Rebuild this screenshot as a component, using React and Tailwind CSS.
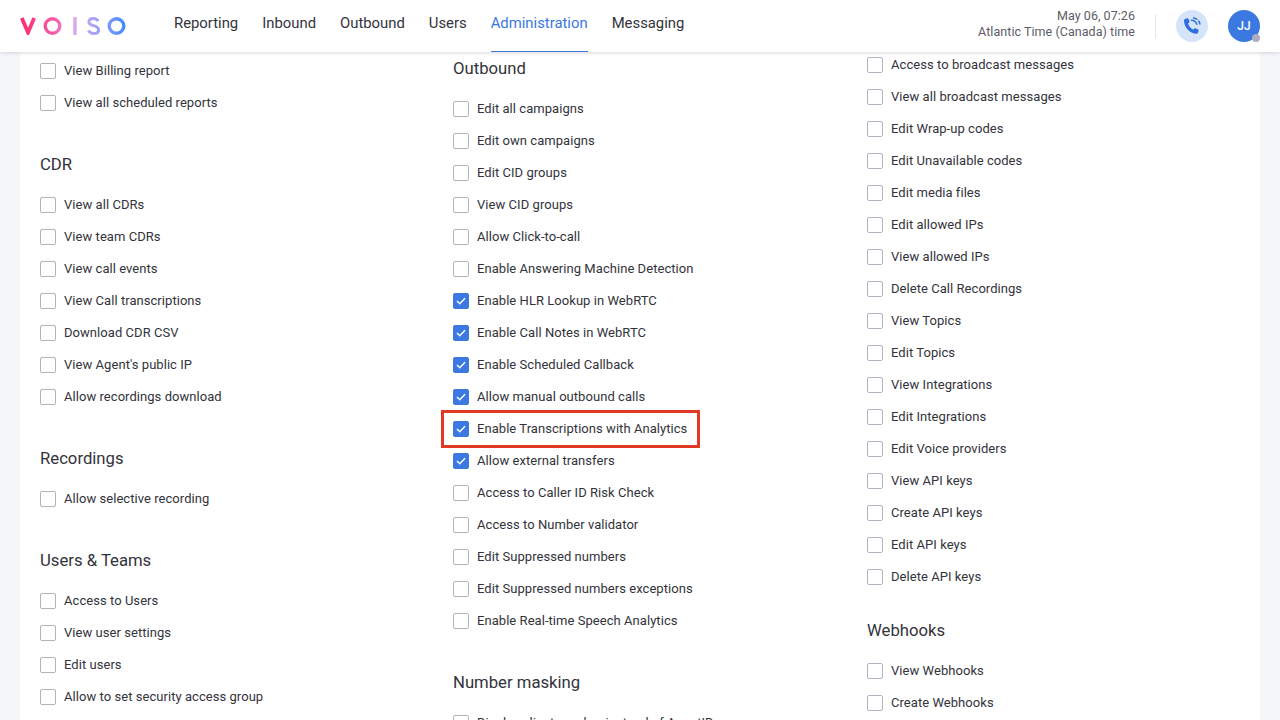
const column1 = [
  { rows: [['View Billing report'], ['View all scheduled reports']] },
  {
    title: 'CDR',
    rows: [['View all CDRs'], ['View team CDRs'], ['View call events'], ['View Call transcriptions'], ['Download CDR CSV'], ["View Agent's public IP"], ['Allow recordings download']],
  },
  { title: 'Recordings', rows: [['Allow selective recording']] },
  {
    title: 'Users & Teams',
    rows: [['Access to Users'], ['View user settings'], ['Edit users'], ['Allow to set security access group']],
  },
];

const column2 = [
  {
    title: 'Outbound',
    first: true,
    rows: [
      ['Edit all campaigns'],
      ['Edit own campaigns'],
      ['Edit CID groups'],
      ['View CID groups'],
      ['Allow Click-to-call'],
      ['Enable Answering Machine Detection'],
      ['Enable HLR Lookup in WebRTC', true],
      ['Enable Call Notes in WebRTC', true],
      ['Enable Scheduled Callback', true],
      ['Allow manual outbound calls', true],
      ['Enable Transcriptions with Analytics', true, true],
      ['Allow external transfers', true],
      ['Access to Caller ID Risk Check'],
      ['Access to Number validator'],
      ['Edit Suppressed numbers'],
      ['Edit Suppressed numbers exceptions'],
      ['Enable Real-time Speech Analytics'],
    ],
  },
  { title: 'Number masking', rows: [['Display client number instead of AgentID']] },
];

const column3 = [
  {
    rows: [
      ['Access to broadcast messages'],
      ['View all broadcast messages'],
      ['Edit Wrap-up codes'],
      ['Edit Unavailable codes'],
      ['Edit media files'],
      ['Edit allowed IPs'],
      ['View allowed IPs'],
      ['Delete Call Recordings'],
      ['View Topics'],
      ['Edit Topics'],
      ['View Integrations'],
      ['Edit Integrations'],
      ['Edit Voice providers'],
      ['View API keys'],
      ['Create API keys'],
      ['Edit API keys'],
      ['Delete API keys'],
    ],
  },
  { title: 'Webhooks', rows: [['View Webhooks'], ['Create Webhooks']], tight: true },
];

const nav = ['Reporting', 'Inbound', 'Outbound', 'Users', 'Administration', 'Messaging'];

function Logo() {
  return (
    <svg width="106" height="18" viewBox="0 0 106 18" fill="none">
      <defs>
        <linearGradient id="voiso" gradientUnits="userSpaceOnUse" x1="0" y1="0" x2="106" y2="0">
          <stop offset="0" stopColor="#fb2d6c" />
          <stop offset="0.33" stopColor="#f55fa8" />
          <stop offset="0.52" stopColor="#d9a8f0" />
          <stop offset="0.72" stopColor="#a3a2f6" />
          <stop offset="1" stopColor="#3f8cff" />
        </linearGradient>
      </defs>
      <path d="M1.8 1 8 15.500 14.200 1" stroke="url(#voiso)" strokeWidth="3.800" />
      <circle cx="32.500" cy="9" r="7.300" stroke="url(#voiso)" strokeWidth="3.400" />
      <path d="M55 0v18" stroke="url(#voiso)" strokeWidth="3.400" />
      <path d="M78 4.200c-.9-1.900-2.600-2.700-4.700-2.700-2.600 0-4.400 1.300-4.400 3.400 0 4.900 9.700 2.400 9.700 8 0 2.200-2 3.600-4.800 3.600-2.400 0-4.300-1-5.300-3.100" stroke="url(#voiso)" strokeWidth="3" />
      <circle cx="96.500" cy="9" r="7.300" stroke="url(#voiso)" strokeWidth="3.400" />
    </svg>
  );
}

function PhoneIcon() {
  return (
    <svg width="18" height="18" viewBox="0 0 18 18" fill="none" className="text-[#2f6fdc]">
      <path
        d="M2.200 1.900 4.300 1.300c.5-.1 1 .1 1.200.6l1 2.500c.2.400.1.900-.3 1.200L5 6.600c.7 2.400 2.700 4.800 5.200 6l1.200-1.100c.3-.3.800-.4 1.200-.2l2.500 1.100c.5.200.7.700.6 1.200l-.6 2c-.2.700-.8 1.100-1.500 1.100C6.700 16.500 1 10.100 1 3.400c0-.7.500-1.300 1.200-1.500Z"
        fill="currentColor"
      />
      <path d="M9 3.300c2.500.3 4.400 2 5 4.500" stroke="currentColor" strokeWidth="1.500" strokeLinecap="round" transform="rotate(-6 9 9)" />
      <path d="M10.600.9c3.200.5 5.600 2.900 6.300 6" stroke="currentColor" strokeWidth="1.500" strokeLinecap="round" strokeDasharray="3.500 2.500" />
    </svg>
  );
}

function Row({ label, checked, marked }) {
  return (
    <div className="relative flex h-8 items-center gap-2">
      <span
        className={`flex h-4 w-4 shrink-0 items-center justify-center rounded-[2px] border ${
          checked ? 'border-[#3b78e0] bg-[#3b78e0]' : 'border-[#b4b2bf] bg-white'
        }`}
      >
        {checked ? (
          <svg width="10" height="8" viewBox="0 0 10 8" fill="none" stroke="white" strokeWidth="1.500">
            <path d="M1 4l2.700 2.700L9 1.300" />
          </svg>
        ) : null}
      </span>
      <span className="whitespace-nowrap">{label}</span>
      {marked ? <div className="absolute left-[-12px] top-[-3px] h-[38px] w-[259px] border-[3px] border-[#e03a26]" /> : null}
    </div>
  );
}

function Group({ title, rows, first, tight }) {
  const top = !title || first ? '' : tight ? 'mt-[26px]' : 'mt-[34px]';
  return (
    <div className={top}>
      {title ? <h3 className="flex h-6 items-center text-[16.7px] leading-6 tracking-normal text-[#33333b]">{title}</h3> : null}
      <div className={title ? 'mt-[12px]' : ''}>
        {rows.map(([label, checked, marked]) => (
          <Row key={label} label={label} checked={checked} marked={marked} />
        ))}
      </div>
    </div>
  );
}

export default function App() {
  return (
    <div className="flex h-screen flex-col overflow-hidden bg-[#f5f7fa] text-[13px] tracking-[0.05px] text-[#33333b] [font-family:Roboto,'Liberation_Sans',sans-serif]">
      <header className="relative z-10 flex h-[52px] shrink-0 items-center bg-white px-5 shadow-[0_1px_4px_rgba(0,0,0,0.15)]">
        <Logo />
        <nav className="ml-12 flex h-full gap-6 text-[14.85px] tracking-normal">
          {nav.map((item) => (
            <a
              key={item}
              className={`flex h-full items-center pb-[5px] ${
                item === 'Administration' ? 'border-b border-[#3b78e0] text-[#3b78e0]' : 'text-[#33333b]'
              }`}
            >
              {item}
            </a>
          ))}
        </nav>
        <div className="ml-auto pb-1 text-right text-[12.5px] leading-4 text-[#5c5c66]">
          <div>May 06, 07:26</div>
          <div>Atlantic Time (Canada) time</div>
        </div>
        <div className="mx-5 h-6 w-px bg-[#e4e6ea]" />
        <button className="flex h-8 w-8 items-center justify-center rounded-full bg-[#d6e4fa]">
          <PhoneIcon />
        </button>
        <div className="relative ml-5 flex h-8 w-8 items-center justify-center rounded-full bg-[#3b78e0] text-[12px] font-medium text-white">
          JJ
          <span className="absolute bottom-0 right-0 h-2 w-2 rounded-full bg-[#aeacc0]" />
        </div>
      </header>
      <main className="mx-5 grid min-h-0 flex-1 grid-cols-[413px_414px_1fr] overflow-hidden bg-white pl-5">
        <div className="pt-[3px]">
          {column1.map((group, i) => (
            <Group key={i} {...group} />
          ))}
        </div>
        <div className="pt-[5px]">
          {column2.map((group, i) => (
            <Group key={i} {...group} />
          ))}
        </div>
        <div className="-mt-[4px] pt-[1px]">
          {column3.map((group, i) => (
            <Group key={i} {...group} />
          ))}
        </div>
      </main>
    </div>
  );
}
